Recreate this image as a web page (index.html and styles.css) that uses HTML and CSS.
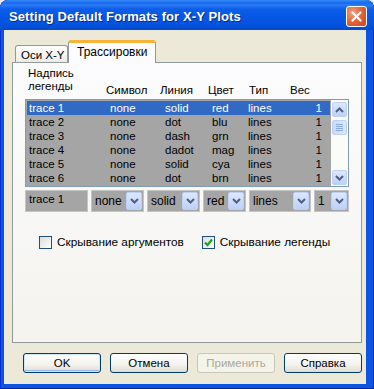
FILE: index.html
```html
<!DOCTYPE html>
<html lang="ru">

<head>
	<meta charset="UTF-8">
	<meta name="viewport" content="width=device-width, initial-scale=1.0">
	<title>Setting Default Formats for X-Y Plots</title>
	<link rel="stylesheet" href="styles.css">
</head>

<body>

	<div class="window">
		<div class="titlebar">
			<span class="title">Setting Default Formats for X-Y Plots</span>
			<div class="close-btn">
				<svg width="13" height="13" viewBox="0 0 13 13">
					<path d="M2.5 2.5 L10.5 10.5 M10.5 2.5 L2.5 10.5" stroke="#fff" stroke-width="2.2" stroke-linecap="round" />
				</svg>
			</div>
		</div>

		<div class="client">
			<div class="tab-strip">
				<div class="tab">Оси X-Y</div>
				<div class="tab tab-active">Трассировки</div>
			</div>

			<div class="tab-page">
				<div class="col-heads">
					<span class="head-multi">Надпись<br>легенды</span>
					<span>Символ</span>
					<span>Линия</span>
					<span>Цвет</span>
					<span>Тип</span>
					<span>Вес</span>
				</div>

				<div class="listbox">
					<div class="list-rows">
						<div class="row selected"><span>trace 1</span><span>none</span><span>solid</span><span>red</span><span>lines</span><span class="num">1</span></div>
						<div class="row"><span>trace 2</span><span>none</span><span>dot</span><span>blu</span><span>lines</span><span class="num">1</span></div>
						<div class="row"><span>trace 3</span><span>none</span><span>dash</span><span>grn</span><span>lines</span><span class="num">1</span></div>
						<div class="row"><span>trace 4</span><span>none</span><span>dadot</span><span>mag</span><span>lines</span><span class="num">1</span></div>
						<div class="row"><span>trace 5</span><span>none</span><span>solid</span><span>cya</span><span>lines</span><span class="num">1</span></div>
						<div class="row"><span>trace 6</span><span>none</span><span>dot</span><span>brn</span><span>lines</span><span class="num">1</span></div>
					</div>
					<div class="vscroll">
						<div class="sb-btn">
							<svg width="9" height="6" viewBox="0 0 9 6"><path d="M1 5 L4.5 1.5 L8 5" fill="none" stroke="#4d6185" stroke-width="2" /></svg>
						</div>
						<div class="sb-thumb">
							<span></span><span></span><span></span><span></span>
						</div>
						<div class="sb-track"></div>
						<div class="sb-btn">
							<svg width="9" height="6" viewBox="0 0 9 6"><path d="M1 1 L4.5 4.5 L8 1" fill="none" stroke="#4d6185" stroke-width="2" /></svg>
						</div>
					</div>
				</div>

				<div class="editors">
					<div class="field">trace 1</div>
					<div class="combo w-none"><span class="combo-text">none</span><span class="combo-btn"><svg width="9" height="6" viewBox="0 0 9 6"><path d="M1 1 L4.5 4.5 L8 1" fill="none" stroke="#4d6185" stroke-width="2" /></svg></span></div>
					<div class="combo w-solid"><span class="combo-text">solid</span><span class="combo-btn"><svg width="9" height="6" viewBox="0 0 9 6"><path d="M1 1 L4.5 4.5 L8 1" fill="none" stroke="#4d6185" stroke-width="2" /></svg></span></div>
					<div class="combo w-color"><span class="combo-text">red</span><span class="combo-btn"><svg width="9" height="6" viewBox="0 0 9 6"><path d="M1 1 L4.5 4.5 L8 1" fill="none" stroke="#4d6185" stroke-width="2" /></svg></span></div>
					<div class="combo w-type"><span class="combo-text">lines</span><span class="combo-btn"><svg width="9" height="6" viewBox="0 0 9 6"><path d="M1 1 L4.5 4.5 L8 1" fill="none" stroke="#4d6185" stroke-width="2" /></svg></span></div>
					<div class="combo w-weight"><span class="combo-text">1</span><span class="combo-btn"><svg width="9" height="6" viewBox="0 0 9 6"><path d="M1 1 L4.5 4.5 L8 1" fill="none" stroke="#4d6185" stroke-width="2" /></svg></span></div>
				</div>

				<div class="checks">
					<label class="check">
						<span class="box"></span>
						<span>Скрывание аргументов</span>
					</label>
					<label class="check">
						<span class="box">
							<svg width="11" height="11" viewBox="0 0 11 11"><path d="M2 5.5 L4.5 8 L9 2.5" fill="none" stroke="#21a121" stroke-width="2.2" /></svg>
						</span>
						<span>Скрывание легенды</span>
					</label>
				</div>
			</div>

			<div class="buttons">
				<div class="btn btn-default">OK</div>
				<div class="btn">Отмена</div>
				<div class="btn btn-disabled">Применить</div>
				<div class="btn">Справка</div>
			</div>
		</div>
	</div>

</body>

</html>
```

FILE: styles.css
```css
* {
	box-sizing: border-box;
}

body {
	margin: 0;
	background-color: #e8ebf2;
	font-family: 'Liberation Sans', Arial, sans-serif;
	font-size: 12px;
	color: #000;
}

.window {
	width: 374px;
	height: 389px;
	display: flex;
	flex-direction: column;
	border-radius: 8px 8px 0 0;
	overflow: hidden;
	background-color: #0b55e2;
	box-shadow: inset -1px 0 #0031a8, inset 1px 0 #0831d9, inset 0 -1px #00289a;
}

/* title bar */
.titlebar {
	height: 30px;
	flex-shrink: 0;
	display: flex;
	align-items: center;
	justify-content: space-between;
	padding: 3px 7px 0 9px;
	background: linear-gradient(#3a8cf8 0, #1468ee 3px, #2c7bf3 5px, #0c5ee8 9px, #0556e3 18px, #0453de 25px, #0648cc 30px);
	border-radius: 8px 8px 0 0;
}

.title {
	color: #fff;
	font-weight: bold;
	font-size: 13px;
	text-shadow: 1px 1px #0a2a8a;
	letter-spacing: 0.1px;
}

.close-btn {
	width: 21px;
	height: 21px;
	display: flex;
	align-items: center;
	justify-content: center;
	border: 1px solid #fff;
	border-radius: 3px;
	background: radial-gradient(circle at 30% 30%, #f1a385 0, #e2683f 45%, #c8431c 100%);
}

/* window body */
.client {
	flex: 1;
	margin: 0 8px 5px 4px;
	padding-top: 10px;
	background-color: #ece9d8;
}

.tab-strip {
	display: flex;
	align-items: flex-end;
	height: 22px;
	padding-left: 11px;
}

.tab {
	width: 53px;
	height: 17px;
	padding: 3px 0 0 5px;
	border: 1px solid #919b9c;
	border-bottom: none;
	border-radius: 3px 3px 0 0;
	background: linear-gradient(#fefefe, #ecebe6);
	font-size: 11.5px;
	white-space: nowrap;
}

.tab-active {
	position: relative;
	z-index: 1;
	width: 88px;
	height: 23px;
	margin-bottom: -1px;
	padding: 2px 0 0 8px;
	border-top: 3px solid #f8b33a;
	background: #fcfcfe;
	font-size: 12px;
}

.tab-page {
	width: 350px;
	height: 281px;
	margin-left: 8px;
	padding: 4px 12px 0;
	border: 1px solid #919b9c;
	background: linear-gradient(#fcfcfe, #f4f3ee);
}

/* column headings */
.col-heads {
	display: grid;
	grid-template-columns: 78px 54px 48px 41px 41px 1fr;
	height: 30px;
	padding-left: 3px;
	font-size: 11.5px;
	line-height: 13px;
}

.col-heads span {
	align-self: end;
}

.col-heads .head-multi {
	align-self: start;
}

/* list */
.listbox {
	display: flex;
	height: 88px;
	margin-top: 2px;
	border: 1px solid #7f9db9;
	background-color: #fff;
}

.list-rows {
	flex: 1;
	padding: 1px;
	background-color: #a5a5a5;
}

.row {
	display: grid;
	grid-template-columns: 81px 55px 47px 36px 60px 1fr;
	height: 14px;
	padding: 0 8px 0 2px;
	font-size: 11.5px;
	line-height: 14px;
}

.row.selected {
	background-color: #316ac5;
	color: #fff;
}

.row .num {
	text-align: right;
}

.vscroll {
	width: 17px;
	display: flex;
	flex-direction: column;
	padding: 2px 1px 1px;
	background-color: #fbfbf8;
}

.sb-btn {
	height: 15px;
	display: flex;
	align-items: center;
	justify-content: center;
	border: 1px solid #bcd0f8;
	border-radius: 2px;
	background: linear-gradient(#dde8fd, #bcd0f8);
}

.sb-thumb {
	height: 15px;
	margin-top: 3px;
	display: flex;
	flex-direction: column;
	justify-content: center;
	align-items: center;
	gap: 1px;
	border: 1px solid #bcd0f8;
	border-radius: 2px;
	background: linear-gradient(90deg, #c9d9fc, #dde8fd);
}

.sb-thumb span {
	width: 7px;
	height: 1px;
	background-color: #8caaeb;
}

.sb-track {
	flex: 1;
}

/* editors under the list */
.editors {
	display: flex;
	justify-content: space-between;
	height: 22px;
	margin-top: 3px;
}

.field {
	width: 63px;
	padding: 2px 3px;
	border: 1px solid #c4c4c4;
	background-color: #a5a5a5;
	font-size: 11.5px;
}

.combo {
	display: flex;
	padding: 1px;
	border: 1px solid #c4c4c4;
	background-color: #a5a5a5;
	font-size: 12px;
}

.w-none,
.w-solid {
	width: 53px;
}

.w-color {
	width: 43px;
}

.w-type {
	width: 62px;
}

.w-weight {
	width: 35px;
}

.combo-text {
	flex: 1;
	padding-left: 2px;
	line-height: 18px;
}

.combo-btn {
	width: 16px;
	display: flex;
	align-items: center;
	justify-content: center;
	border: 1px solid #bcd0f8;
	border-radius: 2px;
	background: linear-gradient(#dde8fd, #bcd0f8);
}

/* check boxes */
.checks {
	display: flex;
	gap: 18px;
	margin-top: 23px;
	padding-left: 14px;
}

.check {
	display: flex;
	align-items: center;
	gap: 5px;
	font-size: 11.8px;
}

.box {
	width: 13px;
	height: 13px;
	display: flex;
	align-items: center;
	justify-content: center;
	border: 1px solid #1c5180;
	background: linear-gradient(135deg, #dcdcd7, #fff);
}

/* dialog buttons */
.buttons {
	display: flex;
	gap: 9px;
	margin-top: 10px;
	padding-left: 19px;
}

.btn {
	width: 78px;
	height: 20px;
	display: flex;
	align-items: center;
	justify-content: center;
	border: 1px solid #003c74;
	border-radius: 3px;
	background: linear-gradient(#fff, #f3f2ec 60%, #dedbd0);
	font-size: 11.5px;
}

.btn-default {
	box-shadow: inset 0 0 0 1px #cee7ff, inset 0 -1px 0 1px #98b8ea;
}

.btn-disabled {
	border-color: #c9c7ba;
	background: #f5f4ea;
	color: #aca899;
}
```
